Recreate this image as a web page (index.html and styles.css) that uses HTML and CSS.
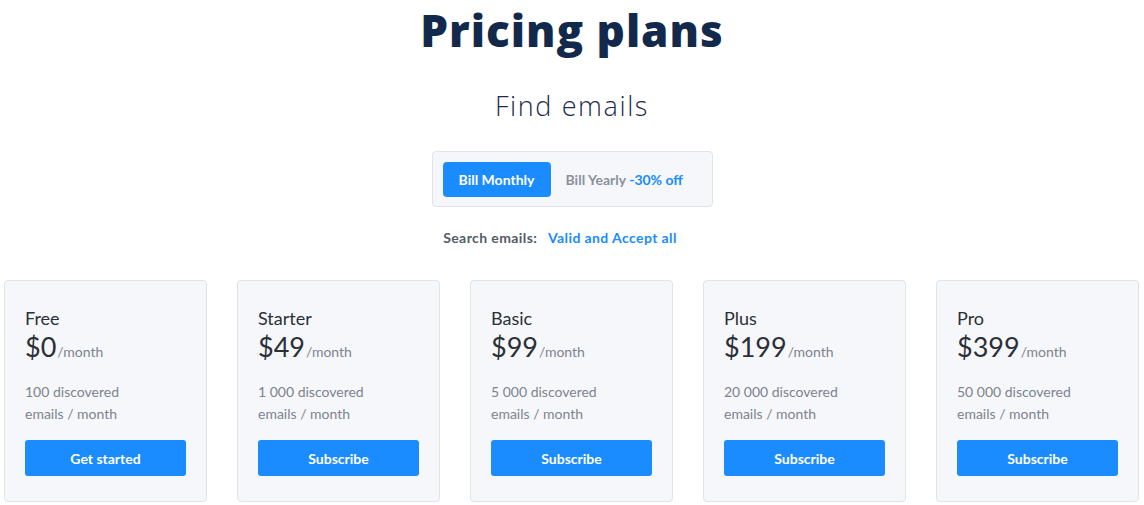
FILE: index.html
```html
<!DOCTYPE html>
<html lang="en">
<head>
<meta charset="utf-8">
<title>Pricing plans</title>
<link rel="stylesheet" href="styles.css">
</head>
<body>
<main class="page">
  <h1 class="title">Pricing plans</h1>
  <h2 class="subtitle">Find emails</h2>
  <div class="toggle">
    <button class="toggle-btn active">Bill Monthly</button>
    <button class="toggle-btn">Bill Yearly <span class="off">-30% off</span></button>
  </div>
  <p class="search">Search emails: <a class="search-link" href="#">Valid and Accept all</a></p>
  <section class="cards">
    <div class="card">
      <div class="plan">Free</div>
      <div class="price"><span class="amount">$0</span><span class="per">/month</span></div>
      <p class="desc">100 discovered<br>emails / month</p>
      <a class="cta" href="#">Get started</a>
    </div>
    <div class="card">
      <div class="plan">Starter</div>
      <div class="price"><span class="amount">$49</span><span class="per">/month</span></div>
      <p class="desc">1 000 discovered<br>emails / month</p>
      <a class="cta" href="#">Subscribe</a>
    </div>
    <div class="card">
      <div class="plan">Basic</div>
      <div class="price"><span class="amount">$99</span><span class="per">/month</span></div>
      <p class="desc">5 000 discovered<br>emails / month</p>
      <a class="cta" href="#">Subscribe</a>
    </div>
    <div class="card">
      <div class="plan">Plus</div>
      <div class="price"><span class="amount">$199</span><span class="per">/month</span></div>
      <p class="desc">20 000 discovered<br>emails / month</p>
      <a class="cta" href="#">Subscribe</a>
    </div>
    <div class="card">
      <div class="plan">Pro</div>
      <div class="price"><span class="amount">$399</span><span class="per">/month</span></div>
      <p class="desc">50 000 discovered<br>emails / month</p>
      <a class="cta" href="#">Subscribe</a>
    </div>
  </section>
</main>
</body>
</html>
```

FILE: styles.css
```css
* { box-sizing: border-box; }
html, body { margin: 0; padding: 0; background: #ffffff; }
body {
  font-family: "Lato", "Noto Sans", sans-serif;
  color: #2b2f38;
}
.page {
  display: flex;
  flex-direction: column;
  align-items: center;
}
.title {
  margin: 0;
  font-family: "Open Sans", "Lato", sans-serif;
  font-size: 44px;
  line-height: 60px;
  font-weight: 800;
  letter-spacing: 1px;
  color: #13294b;
}
.subtitle {
  margin: 28px 0 0;
  font-family: "Open Sans", "Lato", sans-serif;
  font-size: 27px;
  line-height: 36px;
  font-weight: 300;
  letter-spacing: 1.6px;
  color: #1b2b4d;
}
.toggle {
  margin-top: 27px;
  display: flex;
  align-items: center;
  gap: 15px;
  width: 281px;
  height: 56px;
  padding: 10px;
  background: #f5f7fa;
  border: 1px solid #dfe3ea;
  border-radius: 4px;
}
.toggle-btn {
  font-family: inherit;
  font-size: 14px;
  font-weight: 700;
  border: 0;
  background: transparent;
  color: #8b919c;
  padding: 0;
  height: 35px;
  cursor: pointer;
}
.toggle-btn.active {
  width: 108px;
  background: #1a8cff;
  color: #ffffff;
  border-radius: 4px;
}
.off { color: #1a8cff; }
.search {
  margin: 22px 24px 0 0;
  font-size: 14px;
  line-height: 18px;
  font-weight: 700;
  letter-spacing: 0.4px;
  color: #545b68;
}
.search-link {
  margin-left: 7px;
  color: #1a8cff;
  text-decoration: none;
}
.cards {
  margin: 33px 0 0 4px;
  align-self: flex-start;
  display: flex;
  gap: 30px;
  width: 1135px;
}
.card {
  width: 203px;
  height: 222px;
  background: #f6f7fa;
  border: 1px solid #dfe3ea;
  border-radius: 4px;
  padding: 24px 20px;
  display: flex;
  flex-direction: column;
}
.plan {
  font-size: 18px;
  line-height: 26px;
  color: #2b2f38;
}
.price {
  display: flex;
  align-items: baseline;
  gap: 1px;
  margin-top: -1px;
}
.amount {
  font-size: 27px;
  line-height: 34px;
  color: #2b2f38;
}
.per {
  font-size: 14px;
  color: #7d838f;
}
.desc {
  margin: 17px 0 0;
  font-size: 14px;
  line-height: 22px;
  color: #7d838f;
}
.cta {
  margin-top: 15px;
  height: 36px;
  display: flex;
  align-items: center;
  justify-content: center;
  background: #1a8cff;
  color: #ffffff;
  font-size: 14px;
  font-weight: 700;
  border-radius: 3px;
  text-decoration: none;
}
```
